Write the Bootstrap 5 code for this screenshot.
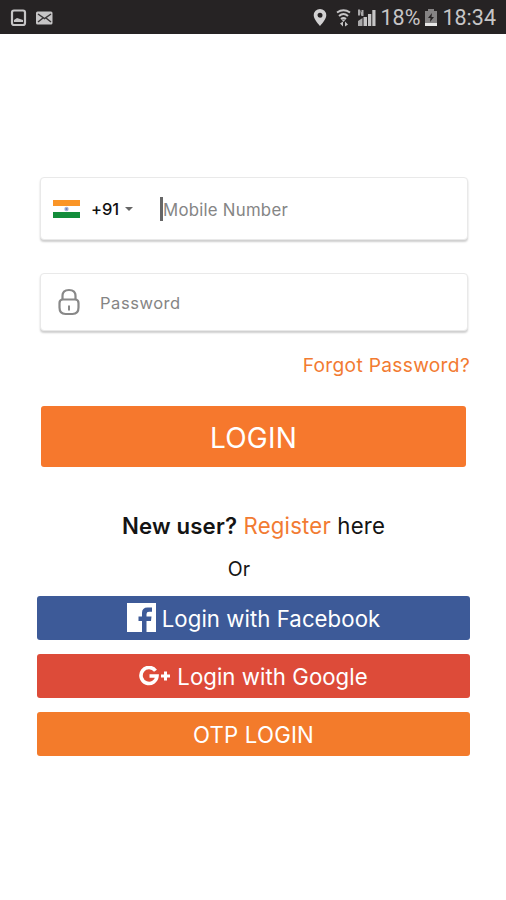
<!DOCTYPE html>
<html lang="en">
<head>
<meta charset="utf-8">
<meta name="viewport" content="width=device-width, initial-scale=1">
<title>Login</title>
<link href="https://cdn.jsdelivr.net/npm/bootstrap@5.3.0/dist/css/bootstrap.min.css" rel="stylesheet">
<style>
body{font-family:Inter,Roboto,sans-serif;color:#141414;min-height:900px;line-height:1}
.status{height:34px;background:#262324;color:#c6c5c6;font:21.5px/34px Roboto,sans-serif;padding:1px 10px 0 10px}
.screen{padding:143px 36px 0 37px}
.field{background:#fff;border:1px solid #e9e9e9;border-radius:4px;box-shadow:0 2px 2px #cfcfcf;margin:0 2px 0 3px;padding:0 12px}
.field input{border:0;outline:0;background:none;min-width:0;padding:2px 0 0;color:#333}
.field input::placeholder{color:#858585;opacity:1}
.phone{height:63px}
.pass{height:58px;margin-top:33px}
.code{font-size:16.5px;font-weight:500;color:#111;margin-left:11px;letter-spacing:-.1px;padding-top:1px}
.caret{border:4px solid transparent;border-top-color:#666;border-bottom:0;margin-left:6px}
.cursor{width:3px;height:24px;background:#666;margin-left:27px}
.mobile{font-size:16.8px;letter-spacing:.25px}
.secret{font-size:16.5px;letter-spacing:.55px;margin-left:19px}
.orange{color:#f27b32;text-decoration:none}
.forgot{font-size:19.2px;margin-top:25px;height:21px;letter-spacing:.3px}
.btn-login,.btn-wide{color:#fff!important;border:0;border-radius:3px;line-height:1}
.btn-login{height:61px;margin:29px 4px 0;padding:2px 0 0;background:#f6782d!important;font-size:28px;letter-spacing:.2px}
.btn-wide{height:44px;font-size:22.2px;letter-spacing:.06px;padding:2px 0 0}
.btn-wide svg{margin-right:6px;margin-top:-3px}
.fb{background:#3d5a98!important}
.gp{background:#dd4b39!important}
.otp{background:#f37b2b!important;letter-spacing:.2px}
.new{font-size:22.2px;margin-top:48px;height:23px;letter-spacing:.18px}
.or{font-size:19.5px;margin:22px 29px 0 0;height:20px}
.stack{margin-top:16px;gap:14px}
</style>
</head>
<body class="bg-white">
<header class="status d-flex align-items-center">
<svg width="43" height="18" viewBox="0 0 43 18"><rect x="2" y="1.500" width="13" height="14.500" rx="2" fill="none" stroke="#c6c5c6" stroke-width="2.200"/><path d="M4 13v-2l3-2 3 1 3 1v2z" fill="#c6c5c6"/><rect x="26" y="2.500" width="16.500" height="13" rx="1.500" fill="#c6c5c6"/><path d="M28 5l6.500 4.500L41 5M28 13l5-4M41 13l-5-4" fill="none" stroke="#393637" stroke-width="1.500"/></svg>
<div class="d-flex align-items-center ms-auto">
<svg width="68" height="20" viewBox="0 0 68 20"><path fill="#d2d1d2" fill-rule="evenodd" d="M7 1a6.300 6.300 0 0 0-6.300 6.300C.7 11.500 7 18 7 18s6.300-6.500 6.300-10.700A6.300 6.300 0 0 0 7 1zm0 3.700a2.500 2.500 0 1 1 0 5 2.500 2.500 0 0 1 0-5z"/><g fill="none" stroke="#c6c5c6" stroke-width="2"><path d="M24 4.500q6.500-4.500 13 0M26 8q4.500-4 9 0M28 11q2.500-2 5 0"/></g><path fill="#c6c5c6" d="M28.500 11.500h4l-2 2.500zM27 15.500l3-2v5zM32 13.500v5l3-2z"/><path fill="#a9a8a9" d="M45 1.500h2v6h-2zM47 1.500l3 6h-2zM48.500 2h2v6h-2zM45 18v-5l4.500-3v8z"/><path fill="#c6c5c6" d="M50.500 18V9h3.500V18zM55 18V6h3.300v12zM59.300 18V2H62.500V18z"/></svg>
<span>18%</span>
<svg class="mx-1" width="14" height="19" viewBox="0 0 14 19"><path fill="#858384" d="M4 1h6v2h3v15H1V3h3z"/><path fill="#262324" d="M8 5l-4 5h2.500L6 14l4-5H7.500z"/><path fill="#e8e8e8" d="M1 15h12v3H1z"/></svg>
<span>18:34</span>
</div>
</header>
<main class="screen">
<div class="field phone d-flex align-items-center">
<svg width="27" height="18" viewBox="0 0 27 18"><path fill="#fff" d="M0 0h27v18H0z"/><path fill="#fa9527" d="M0 0h27v6H0z"/><path fill="#138d3b" d="M0 12h27v6H0z"/><circle cx="13.500" cy="9" r="2.200" fill="#a9b5d8"/><circle cx="13.500" cy="9" r="1" fill="#6c82bb"/></svg>
<span class="code">+91</span><i class="caret"></i><i class="cursor"></i>
<input class="mobile flex-grow-1" type="tel" placeholder="Mobile Number" aria-label="Mobile Number">
</div>
<div class="field pass d-flex align-items-center">
<svg class="ms-1" width="24" height="28" viewBox="0 0 24 28"><g fill="none" stroke="#888" stroke-width="2.200"><path d="M5.500 12V8q0-6 6.500-6t6.500 6v4"/><path d="M6 11.500h12q3.500 0 3.500 3.500v4.500q0 6.500-6 6.500h-7q-6 0-6-6.500V15q0-3.500 3.500-3.500z"/><path d="M12 17.500v5" stroke-width="2"/></g></svg>
<input class="secret flex-grow-1" type="password" placeholder="Password" aria-label="Password">
</div>
<div class="forgot text-end"><a class="orange" href="#">Forgot Password?</a></div>
<div class="d-grid"><button class="btn btn-login">LOGIN</button></div>
<div class="new text-center"><span class="fw-semibold">New user?</span> <a class="orange" href="#">Register</a> here</div>
<div class="or text-center">Or</div>
<div class="stack d-grid">
<button class="btn btn-wide fb d-flex align-items-center justify-content-center"><svg width="29" height="29" viewBox="0 0 29 29"><path fill="#fff" d="M0 0h29v29H0z"/><path fill="#3d5a98" d="M15 29V18h-3.500v-4.500H15V10q0-5.500 5.500-5.500H25v4.200h-3q-2.500 0-2.500 2.300v2.500h5L24 18h-4.500v11z"/></svg>Login with Facebook</button>
<button class="btn btn-wide gp d-flex align-items-center justify-content-center"><svg width="32" height="20" viewBox="0 0 32 20"><path d="M16.500 4.800A8 8 0 1 0 18 10h-7.500" fill="none" stroke="#fff" stroke-width="3.600"/><path d="M26.500 5.500v9M22 10h9" stroke="#fff" stroke-width="3"/></svg>Login with Google</button>
<button class="btn btn-wide otp">OTP LOGIN</button>
</div>
</main>
<script src="https://cdn.jsdelivr.net/npm/bootstrap@5.3.0/dist/js/bootstrap.bundle.min.js"></script>
</body>
</html>
